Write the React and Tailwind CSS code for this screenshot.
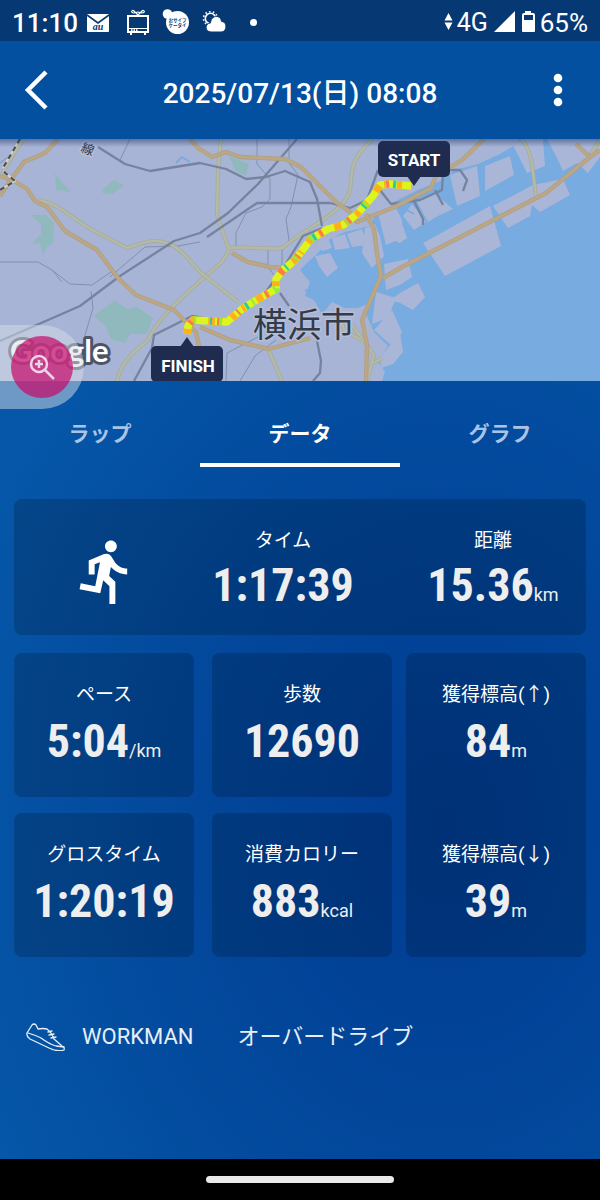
import React from "react";
import { MdDirectionsRun } from "react-icons/md";

const LAND = "#a7b4d6";

const seaPath =
  "M600 381H382L385 372L378 362L388 346L374 332L366 314L372 302L358 308L345 308L332 302L322 314L314 300L305 296L310 282L300 270L308 262L318 253L328 240L345 232L370 226L378 209L398 200L418 190L440 181L455 170L478 164L500 154L515 145L520 139H600Z";

const islands = [
  "423,243 490,206 501,246 445,276",
  "493,206 533,185 563,179 570,195 540,212 532,205 530,216 508,228",
  "485,166 510,156 514,175 485,191",
  "450,175 477,166 480,196 457,206",
  "513,145 523,139 543,139 545,166 527,173",
  "547,139 600,139 600,157 588,173 577,163 563,171 557,158",
  "416,200 434,193 453,209 436,217 428,222",
  "403,216 412,204 426,222 414,230",
  "390,213 400,218 407,238 400,243 388,238",
  "384,264 408,259 412,277 400,285 386,290",
  "390,300 400,293 418,283 425,297 413,310 400,303",
  "315,256 330,253 338,268 327,277 319,266",
  "317,244 328,238 332,248 322,251",
  "332,238 345,234 350,248 335,250",
  "347,234 362,229 367,245 352,247",
  "365,228 375,224 380,236 384,256 372,268 362,253",
  "377,209 393,202 402,220 402,238 386,245",
  "376,292 396,298 388,318 372,324",
  "374,330 392,310 402,332 392,346",
  "380,358 400,332 403,352 393,364 381,368",
];

const parks = [
  "M55 173L60 180L71 192L56 190Z",
  "M103 189L114 180L124 185L113 194L102 193Z",
  "M30 215H46L54 223L53 243L47 247L43 255L40 243L31 244L41 234V224Z",
  "M229 156L249 164L246 176L236 172Z",
  "M94 316L115 300L127 309L137 307L153 318L147 334L130 334L125 343L112 340L105 326Z",
];

const paleRoads = [
  "M38 200C60 203 75 222 98 233L127 248C135 246 145 240 158 241C172 243 178 246 200 272",
  "M221 139L218 170L217 215L229 250L222 262L200 281C180 300 158 318 148 340C136 350 120 362 117 382",
  "M372 139C350 162 353 164 350 190C345 212 310 225 282 248C268 250 250 246 229 248",
  "M200 272L238 302M269 351L282 381M352 325L374 355L367 381M374 363L382 358",
  "M521 139C532 150 532 165 536 196",
  "M24 139C8 160 8 165 0 178",
  "M590 156L600 139M337 307L344 330L361 340",
];

const goldRoads = [
  "M0 176L14 181L27 189L35 201L47 207L65 231L97 250L118 278L136 295L174 310L196 332L201 355",
  "M0 196L12 178L24 162L45 153L58 139M190 139L200 150",
  "M200 149L212 157L226 152L240 157L285 159L301 167L336 202L350 212L357 222L397 206L431 188L436 176L462 160L484 139",
  "M366 214L374 229L377 254L381 276L362 320L367 345L366 381",
  "M383 278L402 267L546 193L590 157L576 144",
  "M232 253L248 262L270 267L288 268M200 327L230 340L269 349L310 338",
  "M590 157L600 150",
];

const railways = [
  "M98 147L125 164L150 171L200 163L226 169L246 179L266 177L285 171L310 182L317 199L322 226",
  "M297 139L258 184L228 213L200 233L174 241L120 276L80 306L0 341",
  "M207 237L257 203L330 203L350 208L367 200L378 170M380 190L391 204L420 200L442 190L443 172",
  "M322 228L303 236L282 270L273 282L260 300M280 293L289 306M134 381L152 348L154 335L192 316L225 322",
  "M317 341L321 361L320 373L313 381M414 201L423 219V225M435 190L443 205M443 170L460 170L467 180L463 191",
];

const thinLines = [
  "M0 262H38L52 270L62 282M52 270L70 284L92 285L114 270M257 139V164L270 179V199L262 207L246 213L236 233V247M289 139V163L298 175L291 207L286 219L289 240L282 251V265M110 277L145 247L178 246L200 242M91 291L93 308L83 342M226 381L227 353L260 336M240 381L255 356L276 340M268 248V267L274 275M130 139L120 160M0 163L15 152",
];

const route =
  "M187 334L188 326L193 320L210 321L227 322L242 309L258 299L276 289V279L283 270L295 260L311 239L328 229L343 225L357 214L373 196L380 185L390 184L412 186";

function RouteMap() {
  return (
    <svg
      viewBox="0 139 600 242"
      className="block w-full"
      role="img"
      aria-label="横浜市"
      strokeLinejoin="round"
      fill="none"
    >
      <defs>
        <linearGradient id="mapShade" x1="0" y1="0" x2="0" y2="1">
          <stop offset="0" stopColor="#1c2f5c" stopOpacity=".5" />
          <stop offset="1" stopColor="#1c2f5c" stopOpacity="0" />
        </linearGradient>
      </defs>
      <rect y="139" width="600" height="242" fill={LAND} />
      <path d={seaPath} fill="#78abdf" />
      {islands.map((points) => (
        <polygon key={points} points={points} fill="#a9b6d8" />
      ))}
      <path
        d="M305 290L325 300M315 275L330 294L322 303M342 225L350 216M398 205L414 214M176 163L182 157L190 162"
        stroke="#78abdf"
        strokeWidth="2"
      />
      {parks.map((d) => (
        <path key={d} d={d} fill="#90b9bd" />
      ))}
      {thinLines.map((d) => (
        <path key={d} d={d} stroke="#8190b0" strokeWidth="1" />
      ))}
      {paleRoads.map((d) => (
        <g key={d}>
          <path d={d} stroke="#a4ac9d" strokeWidth="4" />
          <path d={d} stroke="#b4baa6" strokeWidth="2.4" />
        </g>
      ))}
      {railways.map((d) => (
        <path key={d} d={d} stroke="#76839f" strokeWidth="2.3" />
      ))}
      {goldRoads.map((d) => (
        <g key={d}>
          <path d={d} stroke="#b09f86" strokeWidth="4.4" />
          <path d={d} stroke="#bba784" strokeWidth="2.8" />
        </g>
      ))}
      <path d="M20 139L3 168M0 190L15 181L3 171" stroke="#d1d3d5" strokeWidth="2" />
      <path d="M20 139L3 168M0 190L15 181L3 171" stroke="#4c4c4f" strokeWidth="2" strokeDasharray="5 4" />

      <path d={route} stroke="#dcf51c" strokeWidth="7.5" />
      <path d={route} stroke="#ffae1c" strokeWidth="7.5" strokeDasharray="5 9 3 14 7 5 2 11" />
      <path d={route} stroke="#ff7b45" strokeWidth="7.5" strokeDasharray="3 26 5 19 2 31" strokeDashoffset="-11" />
      <path d={route} stroke="#8fee3c" strokeWidth="7.5" strokeDasharray="2 23 3 37" strokeDashoffset="-17" />
      <path d={route} stroke="#2fc9a2" strokeWidth="7.5" strokeDasharray="2 39 3 57" strokeDashoffset="-33" />

      <g fontFamily="'Noto Sans CJK JP', sans-serif" fill="#343a46" stroke="#b3bfdb" strokeWidth="3" paintOrder="stroke">
        <text x="304" y="337" fontSize="34" textAnchor="middle">横浜市</text>
        <text x="80" y="151" fontSize="13" transform="rotate(22 80 151)">線</text>
      </g>

      <g fill="#1f2c50">
        <rect x="378" y="141" width="72" height="36" rx="5" />
        <path d="M407 176H421L414 186Z" />
        <rect x="151" y="346" width="72" height="36" rx="5" />
        <path d="M180 347L187 337L194 347Z" />
      </g>
      <g fontFamily="Roboto, sans-serif" fontWeight="700" fontSize="17" fill="#fff" textAnchor="middle">
        <text x="414" y="166">START</text>
        <text x="188" y="372">FINISH</text>
      </g>
      <text
        x="10"
        y="362"
        fontFamily="Lato, sans-serif"
        fontWeight="700"
        fontSize="31"
        fill="#ffffff"
        stroke="#4d5565"
        strokeWidth="6"
        paintOrder="stroke"
      >
        Google
      </text>
      <rect y="139" width="600" height="8" fill="url(#mapShade)" />
    </svg>
  );
}

function StatusBar() {
  return (
    <div className="flex h-[41px] items-center bg-[#063974] px-3 pt-1 font-['Roboto',sans-serif] text-[26px] leading-8 font-medium text-white">
      <span>11:10</span>
      <svg className="ml-2 h-5 w-6 shrink-0" viewBox="0 0 24 20" fill="none">
        <rect x="1" y="1" width="22" height="18" rx="1" fill="#fff" />
        <path d="M1 2L12 10L23 2" stroke="#063974" strokeWidth="1.6" />
        <text x="12" y="17" fontFamily="'Liberation Serif', serif" fontStyle="italic" fontWeight="700" fontSize="10" textAnchor="middle" fill="#063974">au</text>
      </svg>
      <svg className="ml-4 h-7 w-6 shrink-0" viewBox="0 0 24 28" fill="none" stroke="#fff">
        <rect x="2" y="7" width="20" height="16" strokeWidth="2" />
        <path d="M3 19.500H21" strokeWidth="1" />
        <path d="M5 21.200H12" strokeWidth="1.800" strokeDasharray="1.500 1" />
        <path d="M5 23V26M19 23V26" strokeWidth="2" />
        <path d="M12 6L8 2C6 0 4 4 8 4L12 3L16 4C20 4 18 0 16 2L12 6" strokeWidth="1.200" />
      </svg>
      <svg className="ml-3 h-7 w-7 shrink-0" viewBox="0 0 28 28">
        <circle cx="5.500" cy="5" r="4.800" fill="#fff" />
        <circle cx="15.500" cy="13.500" r="11.500" fill="#fff" />
        <g fontFamily="'Noto Sans CJK JP', sans-serif" fontWeight="700" fontSize="4.500" fill="#063974" textAnchor="middle">
          <text x="15.500" y="13">おサイフ</text>
          <text x="15.500" y="18">ケータイ</text>
        </g>
      </svg>
      <svg className="ml-3 h-6 w-6 shrink-0" viewBox="0 0 24 24" fill="none">
        <circle cx="8.500" cy="7.500" r="5.200" stroke="#fff" strokeWidth="1.600" />
        <circle cx="8.500" cy="7.500" r="7" stroke="#fff" strokeWidth="1.600" strokeDasharray="1.600 2.300" />
        <path d="M9 21C3 21 2 12.500 8.500 12C9 3.500 19 3.500 19.500 10.500C25.500 10.500 25.500 21 19 21Z" fill="#fff" stroke="#063974" strokeWidth="1" />
      </svg>
      <span className="ml-6 h-[7px] w-[7px] shrink-0 rounded-full bg-white" />
      <div className="ml-auto flex items-center">
        <svg className="h-5 w-[9px]" viewBox="0 0 9 20" fill="#fff">
          <path d="M4.500 0L8.500 7.500H.500ZM4.500 17L.500 9.500H8.500Z" />
        </svg>
        <span className="ml-1 text-[25px] font-normal">4G</span>
        <svg className="ml-1 h-6 w-6" viewBox="0 0 24 24" fill="#fff">
          <path d="M23 0V21H2Z" />
        </svg>
        <svg className="ml-1 h-6 w-4" viewBox="0 0 16 24">
          <path d="M5 0H11V2H13Q15 2 15 4V20Q15 21 14 21H3Q2 21 2 20V4Q2 2 4 2H5Z" fill="#fff" />
          <rect x="4" y="4" width="9" height="5" fill="#063974" />
        </svg>
        <span className="ml-1 font-normal">65%</span>
      </div>
    </div>
  );
}

function Metric({ label, value, unit, className = "pt-[30px]", valueClass = "mt-[10px]" }) {
  return (
    <div className={"flex h-36 flex-col items-center " + className}>
      <h2 className="text-[19px] leading-6 whitespace-nowrap">{label}</h2>
      <p className={"flex items-baseline leading-[48px] whitespace-nowrap " + valueClass}>
        <span className="font-['Roboto_Condensed','Liberation_Sans_Narrow',Roboto,sans-serif] text-[46px] leading-[48px] font-bold text-[#eeeeee]">
          {value}
        </span>
        {unit && <span className="text-[18px] text-[#eeeeee]">{unit}</span>}
      </p>
    </div>
  );
}

const tabs = ["ラップ", "データ", "グラフ"];
const card = "rounded-lg bg-black/18 pt-[30px]";

export default function App() {
  return (
    <div className="flex min-h-screen flex-col bg-[#0450a2] bg-[radial-gradient(ellipse_85%_55%_at_74%_69%,#003c92_0%,#02469a_45%,#0450a2_80%,#0657a9_100%)] font-['Roboto','Noto_Sans_CJK_JP',sans-serif] text-white">
      <StatusBar />
      <header className="flex h-[98px] items-center justify-between bg-[#034fa0] px-4">
        <button type="button" aria-label="戻る" className="flex h-12 w-12 items-center">
          <svg className="h-10 w-10" viewBox="0 0 40 40" fill="none" stroke="#fff" strokeWidth="4.500">
            <path d="M30 2L12 20L30 38" />
          </svg>
        </button>
        <h1 className="pt-2 text-[28px] leading-9 font-medium">2025/07/13(日) 08:08</h1>
        <button type="button" aria-label="メニュー" className="flex h-12 w-12 items-center justify-center">
          <svg className="h-9 w-9" viewBox="0 0 36 36" fill="#fff">
            <circle cx="16" cy="6" r="4.300" />
            <circle cx="16" cy="18" r="4.300" />
            <circle cx="16" cy="30" r="4.300" />
          </svg>
        </button>
      </header>

      <section className="relative">
        <RouteMap />
        <button
          type="button"
          aria-label="地図を拡大"
          className="absolute -bottom-7 left-0 flex h-[84px] w-[84px] items-center justify-center rounded-r-full bg-[#d5dbe5]/50"
        >
          <span className="flex h-[62px] w-[62px] items-center justify-center rounded-full bg-[#c8086a]/70">
            <svg className="h-7 w-7" viewBox="0 0 28 28" fill="none" stroke="#f0d3e8" strokeWidth="2.500">
              <circle cx="11" cy="11" r="8" />
              <path d="M17 17L26 26M11 7V15M7 11H15" />
            </svg>
          </span>
        </button>
      </section>

      <nav className="grid h-[86px] grid-cols-3">
        {tabs.map((tab) => (
          <button
            key={tab}
            type="button"
            className={
              "border-b-4 pt-[25px] text-[21px] " +
              (tab === "データ" ? "border-white font-bold text-white" : "border-transparent font-bold text-[#a9c4e6]")
            }
          >
            {tab}
          </button>
        ))}
      </nav>

      <main className="flex flex-1 flex-col px-[14px] pt-8">
        <section className="grid h-[136px] grid-cols-[180fr_178fr_214fr] overflow-hidden rounded-lg bg-black/18">
          <div className="flex items-center justify-center pl-1">
            <MdDirectionsRun className="h-[71px] w-[71px]" aria-hidden="true" />
          </div>
          <Metric label="タイム" value="1:17:39" className="pt-[30px]" valueClass="mt-2" />
          <Metric label="距離" value="15.36" unit="km" className="pt-[30px] pl-7" valueClass="mt-2" />
        </section>

        <section className="mt-[18px] grid grid-cols-[378fr_180fr] gap-[14px]">
          <div className="grid grid-cols-2 gap-x-[18px] gap-y-4">
            <Metric label="ペース" value="5:04" unit="/km" className={card} />
            <Metric label="歩数" value="12690" className={card} />
            <Metric label="グロスタイム" value="1:20:19" className={card} />
            <Metric label="消費カロリー" value="883" unit="kcal" className={card} />
          </div>
          <div className="flex flex-col gap-4 rounded-lg bg-black/18">
            <Metric label="獲得標高(↑)" value="84" unit="m" />
            <Metric label="獲得標高(↓)" value="39" unit="m" />
          </div>
        </section>

        <section className="mt-16 flex items-center pl-3 text-[22px] leading-8 text-[#e8eff8]">
          <svg className="h-7 w-10 shrink-0" viewBox="0 0 40 28" fill="none" stroke="currentColor" strokeWidth="1.300" strokeLinejoin="round" strokeLinecap="round">
            <path d="M1 10L6 2Q8 0 10 2L12 6Q17 5 21 6Q26 10 28 16L36 23Q39 24 38 27Q31 29 23 25L4 16Q0 13 1 10Z" />
            <path d="M2 10Q9 12 15 15Q23 21 30 23L38 24M22 9L26 8M23 12L28 11M25 15L30 14" />
          </svg>
          <span className="ml-4">WORKMAN</span>
          <span className="ml-11">オーバードライブ</span>
        </section>
      </main>

      <footer className="flex h-[41px] items-center justify-center bg-black">
        <span className="h-[7px] w-[188px] rounded-full bg-[#e9e9e9]" />
      </footer>
    </div>
  );
}
